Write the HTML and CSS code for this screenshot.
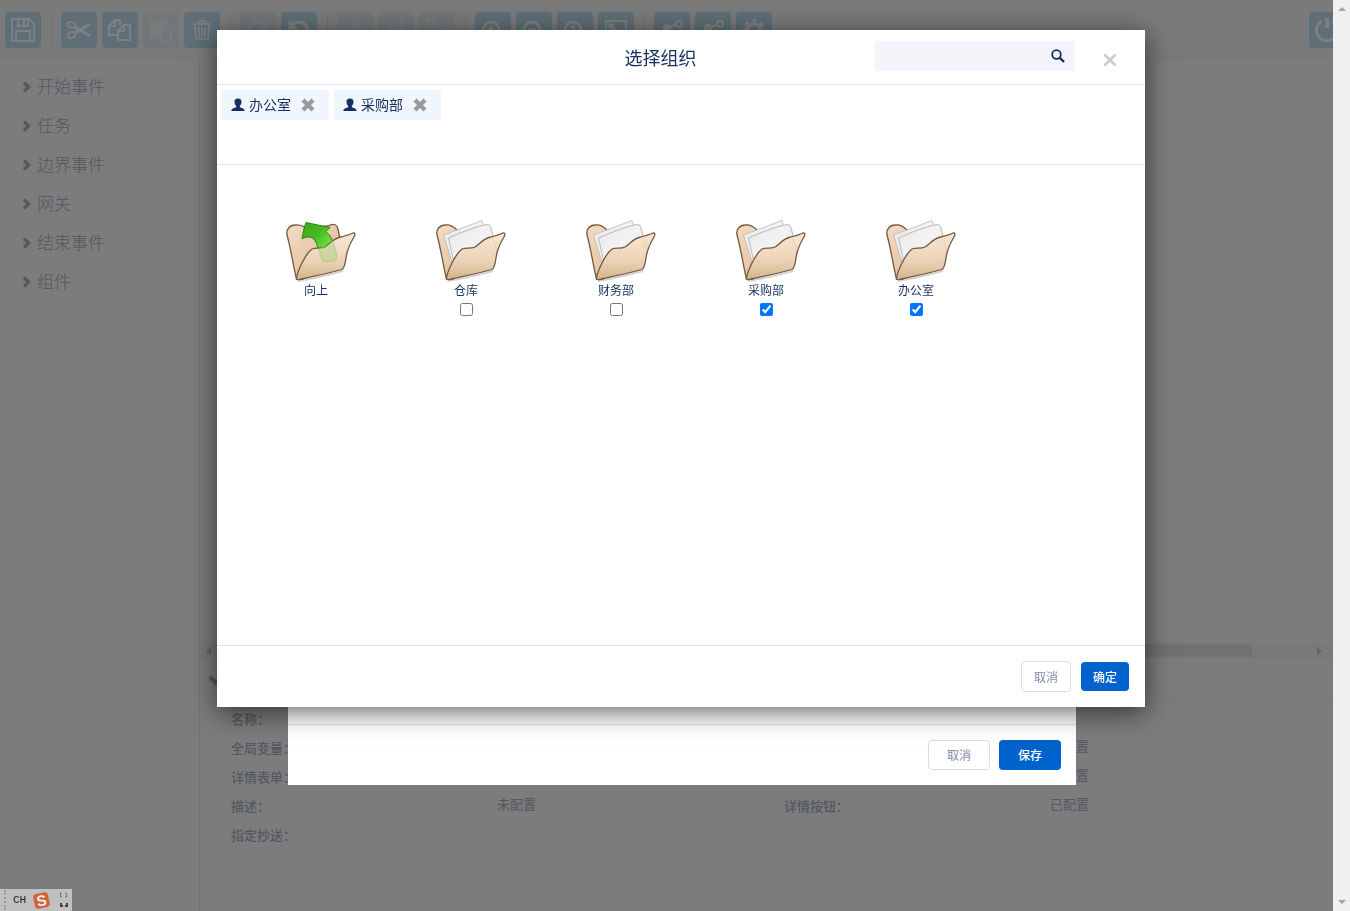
FILE: index.html
```html
<!DOCTYPE html>
<html lang="zh">
<head>
    <meta charset="UTF-8">
    <meta name="viewport" content="width=device-width, initial-scale=1.0">
    <title>流程设计器</title>
    <link rel="stylesheet" href="styles.css">
</head>
<body>
    <svg class="defs" width="0" height="0" aria-hidden="true">
        <defs>
            <linearGradient id="back" x1="0" y1="0" x2="1" y2="1">
                <stop offset="0" stop-color="#f5dcc4"/>
                <stop offset="1" stop-color="#d9b48e"/>
            </linearGradient>
            <linearGradient id="front" x1="0" y1="0" x2="0" y2="1">
                <stop offset="0" stop-color="#f9e6d2"/>
                <stop offset="0.6" stop-color="#ecd3b6"/>
                <stop offset="1" stop-color="#d3b48b"/>
            </linearGradient>
            <linearGradient id="paper" x1="0" y1="0" x2="1" y2="1">
                <stop offset="0" stop-color="#e6e6e6"/>
                <stop offset="0.5" stop-color="#f3f3f3"/>
                <stop offset="1" stop-color="#dedede"/>
            </linearGradient>
            <linearGradient id="green" x1="0" y1="0" x2="1" y2="1">
                <stop offset="0" stop-color="#46a51c"/>
                <stop offset="0.4" stop-color="#45b820"/>
                <stop offset="0.8" stop-color="#73ea42"/>
                <stop offset="1" stop-color="#55cb2b"/>
            </linearGradient>
            <symbol id="flap" viewBox="0 0 80 64">
                <path d="M20.500 59C21 55 23 50 26 44C29 38 32 33 36 30C40 28.500 45 30 49 28C54 25 57 20 63 18.500C69 17 73 16 77 14Q79.500 13.500 78.500 17C76 21 73 27 71.500 32C69 40 70 48 66 50.500C54 54 34 58 23.500 60.500Q20 61 20.500 59Z" fill="url(#front)" stroke="#6f5941" stroke-width="1.300"/>
            </symbol>
            <symbol id="folder" viewBox="0 0 80 64">
                <path d="M22 62C35 60 52 56 67 52" fill="none" stroke="#d4d4d4" stroke-width="2"/>
                <path d="M20.500 60C17 46 15 30 11 16C10 10 14 6 19 6C24 5 27 7 31 11L60 30L27 60Z" fill="url(#back)" stroke="#6f5941" stroke-width="1.300"/>
                <path d="M17.500 16L56 1.500L60 14L27 46Z" fill="url(#paper)" stroke="#b9b9b9" stroke-width="0.800"/>
                <path d="M22.500 19C34 14 48 8 61 5.500Q64 5 65 9L68 20L50 35L28 44Z" fill="url(#paper)" stroke="#aaa" stroke-width="0.800"/>
                <use href="#flap" width="80" height="64"/>
                <path d="M31 40L35 52L66 43M67 20L71 31" fill="none" stroke="#dcc8ad" stroke-width="0.700"/>
            </symbol>
            <symbol id="folder-up" viewBox="0 0 80 64">
                <path d="M22 62C35 60 52 56 67 52" fill="none" stroke="#d4d4d4" stroke-width="2"/>
                <path d="M20.500 60C17 46 15 30 11 16C10 10 14 6 19 6C24 5 27 7 31 9L52 7C57 4 61 5 62 10L66 30L27 60Z" fill="url(#back)" stroke="#6f5941" stroke-width="1.300"/>
                <path d="M26 20C27 14 28 8 30 3.500C38 5 46 7 54 8.500L50 12.500C54 16 56 20 57.500 24L58 34L46 38L42 30C41 24 38 18 33 18C30 18 28 19 26 20Z" fill="url(#green)" stroke="#2c8410" stroke-width="1"/>
                <use href="#flap" width="80" height="64"/>
                <path d="M43 30L50 28L57 22L61 37Q61 41 58 42L49 43Q46 43 45.500 40Z" fill="#a8d077" fill-opacity="0.450" stroke="#a8c47f" stroke-width="0.700"/>
            </symbol>
            <symbol id="user" viewBox="0 0 14 14">
                <path d="M7 0.500C4.600 0.500 3.300 1.900 3.500 4C3.600 6 4.400 7.200 5.200 8V9C4.300 10 0.500 10.200 0.300 13H13.700C13.500 10.200 9.700 10 8.800 9V8C9.600 7.200 10.400 6 10.500 4C10.700 1.900 9.400 0.500 7 0.500Z" fill="#16305f"/>
            </symbol>
            <symbol id="cross" viewBox="0 0 14 14">
                <path d="M2 2L12 12M12 2L2 12" stroke="#999" stroke-width="4.200"/>
            </symbol>
            <symbol id="chevron" viewBox="0 0 10 12">
                <path d="M2 1.500L6.500 6L2 10.500" fill="none" stroke="currentColor" stroke-width="3.400"/>
            </symbol>
            <symbol id="share" viewBox="0 0 24 24">
                <path d="M5 19L7 10L17 6" fill="none" stroke="#fff" stroke-width="2"/>
                <circle cx="7" cy="10" r="3" fill="#fff"/>
                <circle cx="19" cy="6" r="3" fill="none" stroke="#fff" stroke-width="2"/>
                <circle cx="5" cy="19" r="2" fill="#fff"/>
            </symbol>
        </defs>
    </svg>

    <div class="app">
        <div class="toolbar">
            <button type="button" title="保存"><svg viewBox="0 0 24 24"><path d="M1 1H18L23 6V23H1ZM7 1V8H17V1M5 23V13H19V23M13 2V7"/></svg></button>
            <span class="sep"></span>
            <button type="button" title="剪切"><svg viewBox="0 0 24 24"><ellipse cx="4.500" cy="7" rx="4" ry="2.800" transform="rotate(20 4.500 7)"/><ellipse cx="4.500" cy="17" rx="4" ry="2.800" transform="rotate(-20 4.500 17)"/><path d="M8 9L23 18M8 15L23 6" stroke-width="3"/></svg></button>
            <button type="button" title="复制"><svg viewBox="0 0 24 24"><path d="M9 17H1V8L7 2H12V7M7 2V8H1M10 13L16 7H22V22H10ZM16 7V13H10"/></svg></button>
            <button type="button" title="粘贴" disabled><svg viewBox="0 0 24 24"><path fill="#fff" d="M2 3H17V8H12V18H2Z"/><path d="M12 11H18L22 15V22H12Z"/></svg></button>
            <button type="button" title="删除"><svg viewBox="0 0 24 24"><path stroke-width="1.500" d="M3 6H21M9 5V3H15V5M5 7L6 21H18L19 7M9 9V19M12 9V19M15 9V19"/></svg></button>
            <span class="sep"></span>
            <button type="button" title="重做" disabled><svg viewBox="0 0 24 24"><path stroke-width="3" d="M20 9A9 9 0 1 0 21 14M21 3V10H14"/></svg></button>
            <button type="button" title="撤销"><svg viewBox="0 0 24 24"><path stroke-width="3" d="M4 9A9 9 0 1 1 3 14M3 3V10H10"/></svg></button>
            <span class="sep"></span>
            <button type="button" title="水平对齐" disabled><svg viewBox="0 0 24 24"><path stroke-width="3" d="M12 2V22M7 7H17M4 17H20"/></svg></button>
            <button type="button" title="垂直对齐" disabled><svg viewBox="0 0 24 24"><path stroke-width="3" d="M2 12H22M7 8V17M17 3V21"/></svg></button>
            <button type="button" title="相同大小" disabled><svg viewBox="0 0 24 24"><path d="M2 2H10V9H2ZM12 12H22V22H12ZM5 12V20"/></svg></button>
            <span class="sep"></span>
            <button type="button" title="放大"><svg viewBox="0 0 24 24"><circle cx="10" cy="12" r="8" stroke-width="3"/><path stroke-width="3" d="M6 12H14M10 8V16M16 18L22 23"/></svg></button>
            <button type="button" title="缩小"><svg viewBox="0 0 24 24"><circle cx="10" cy="12" r="8" stroke-width="3"/><path stroke-width="3" d="M6 12H14M16 18L22 23"/></svg></button>
            <button type="button" title="实际大小"><svg viewBox="0 0 24 24"><circle cx="10" cy="12" r="8" stroke-width="3"/><path d="M8 10L11 8V17M16 18L22 23"/></svg></button>
            <button type="button" title="适应屏幕"><svg viewBox="0 0 24 24"><path d="M2 3H22V21H2Z"/><path fill="#fff" d="M4 5L11 6L9 8L13 12L11 14L7 10L5 12Z" stroke="none"/></svg></button>
            <span class="sep"></span>
            <button type="button" title="添加拐点"><svg viewBox="0 0 24 24"><use href="#share"/></svg></button>
            <button type="button" title="删除拐点"><svg viewBox="0 0 24 24"><use href="#share"/></svg></button>
            <button type="button" title="设置"><svg viewBox="0 0 24 24"><circle cx="12" cy="13" r="7" stroke-width="4"/><circle cx="12" cy="13" r="10" stroke-width="4" stroke-dasharray="4 3.850" stroke-dashoffset="2"/></svg></button>
            <button type="button" title="退出" class="power"><svg viewBox="0 0 24 24"><path stroke-width="3" d="M7 3A10.500 10.500 0 1 0 17 3"/><path stroke-width="4" d="M12 0V10"/></svg></button>
        </div>

        <div class="workspace">
            <nav class="sidebar">
                <a href="#"><svg><use href="#chevron"/></svg>开始事件</a>
                <a href="#"><svg><use href="#chevron"/></svg>任务</a>
                <a href="#"><svg><use href="#chevron"/></svg>边界事件</a>
                <a href="#"><svg><use href="#chevron"/></svg>网关</a>
                <a href="#"><svg><use href="#chevron"/></svg>结束事件</a>
                <a href="#"><svg><use href="#chevron"/></svg>组件</a>
            </nav>
            <main class="main">
                <div class="canvas"></div>
                <div class="h-scroll">
                    <svg viewBox="0 0 5 8"><path d="M5 0V8L0 4Z"/></svg>
                    <span class="h-thumb"></span>
                    <svg viewBox="0 0 5 8"><path d="M0 0V8L5 4Z"/></svg>
                </div>
                <div class="props-title"><svg viewBox="0 0 16 12"><path d="M2 2L8 8L14 2" fill="none" stroke="currentColor" stroke-width="4"/></svg></div>
                <div class="props">
                    <b>名称：</b><span></span><b></b><span></span>
                    <b>全局变量：</b><span></span><b></b><span>已配置</span>
                    <b>详情表单：</b><span></span><b></b><span>已配置</span>
                    <b>描述：</b><span>未配置</span><b>详情按钮：</b><span>已配置</span>
                    <b>指定抄送：</b><span></span><b></b><span></span>
                </div>
            </main>
        </div>
    </div>

    <div class="backdrop"></div>

    <div class="modal modal-config">
        <div class="modal-footer">
            <button type="button" class="btn">取消</button>
            <button type="button" class="btn btn-primary">保存</button>
        </div>
    </div>

    <div class="modal modal-org" role="dialog" aria-labelledby="orgTitle">
        <div class="modal-header">
            <h4 id="orgTitle">选择组织</h4>
            <div class="search">
                <input type="text" aria-label="搜索">
                <button type="button" title="搜索"><svg viewBox="0 0 14 14"><circle cx="5.500" cy="5.500" r="4.300" fill="none" stroke="#16305f" stroke-width="1.800"/><path d="M8.500 8.500L13 13" stroke="#16305f" stroke-width="2.400"/></svg></button>
            </div>
            <button type="button" class="close" title="关闭"><svg viewBox="0 0 14 14"><path d="M1.500 1.500L12.500 12.500M12.500 1.500L1.500 12.500" stroke="#ccc" stroke-width="2.600"/></svg></button>
        </div>
        <div class="selected">
            <span class="tag"><svg><use href="#user"/></svg><span>办公室</span><button type="button" title="移除"><svg><use href="#cross"/></svg></button></span>
            <span class="tag"><svg><use href="#user"/></svg><span>采购部</span><button type="button" title="移除"><svg><use href="#cross"/></svg></button></span>
        </div>
        <div class="folders">
            <a href="#" class="folder"><svg><use href="#folder-up"/></svg>向上</a>
            <label class="folder"><svg><use href="#folder"/></svg>仓库<input type="checkbox"></label>
            <label class="folder"><svg><use href="#folder"/></svg>财务部<input type="checkbox"></label>
            <label class="folder"><svg><use href="#folder"/></svg>采购部<input type="checkbox" checked></label>
            <label class="folder"><svg><use href="#folder"/></svg>办公室<input type="checkbox" checked></label>
        </div>
        <div class="modal-footer">
            <button type="button" class="btn">取消</button>
            <button type="button" class="btn btn-primary">确定</button>
        </div>
    </div>

    <div class="page-scroll">
        <svg viewBox="0 0 8 4"><path d="M0 4H8L4 0Z"/></svg>
        <svg viewBox="0 0 8 4"><path d="M0 0H8L4 4Z"/></svg>
    </div>

    <div class="ime">
        <span>CH</span>
        <svg class="ime-logo" viewBox="0 0 16 16"><g transform="rotate(-12 8 8)"><rect x="1" y="1" width="14" height="14" rx="3" fill="#d2603a"/><text x="8" y="13" text-anchor="middle">S</text></g></svg>
        <svg class="ime-tools" viewBox="0 0 10 18"><path d="M3 2H1.500V6H3M6 2H7.500V6H6" fill="none" stroke="#777"/><path d="M2 12V15H4M8 12V15H6" fill="none" stroke="#4a4040" stroke-width="2"/></svg>
    </div>
</body>
</html>
```

FILE: styles.css
```css
* {
    box-sizing: border-box;
}
body {
    margin: 0;
    overflow: hidden;
    font-family: "Microsoft YaHei", "Noto Sans CJK SC", sans-serif;
    font-size: 13px;
    color: #16305f;
}
button {
    font-family: inherit;
    padding: 0;
    border: none;
    background: none;
    cursor: pointer;
}
a {
    color: inherit;
    text-decoration: none;
}
svg {
    display: block;
    flex: none;
}
.defs {
    position: absolute;
}

/* designer page */
.app {
    display: flex;
    flex-direction: column;
    height: 100vh;
    background: #f8f8f8;
    color: #a8b0c4;
}
.toolbar {
    display: flex;
    align-items: center;
    gap: 5px;
    height: 60px;
    padding: 0 5px;
    background: #f4f4f4;
    border-bottom: 1px solid #eee;
}
.toolbar button {
    display: flex;
    align-items: center;
    justify-content: center;
    flex: none;
    width: 36px;
    height: 36px;
    border-radius: 4px;
    background: #bedcee;
}
.toolbar button:disabled {
    opacity: 0.3;
}
.toolbar svg {
    width: 24px;
    height: 24px;
    fill: none;
    stroke: #fff;
    stroke-width: 2;
}
.toolbar .power {
    margin-left: auto;
}
.sep {
    width: 10px;
    height: 30px;
    background: linear-gradient(#e2e2e2, #e2e2e2) center / 1px 100% no-repeat;
}
.workspace {
    display: flex;
    flex: 1;
    min-height: 0;
}
.sidebar {
    width: 200px;
    padding-top: 6px;
    border-right: 1px solid #e8e8e8;
}
.sidebar a {
    display: flex;
    align-items: center;
    gap: 5px;
    height: 39px;
    padding-left: 22px;
    font-size: 17px;
    font-weight: 300;
}
.sidebar svg {
    width: 10px;
    height: 12px;
    margin-top: 2px;
}
.main {
    display: flex;
    flex: 1;
    flex-direction: column;
}
.canvas {
    flex: 1;
    margin-right: 4px;
    border-right: 17px solid #f2f2f2;
}
.h-scroll {
    display: flex;
    align-items: center;
    height: 17px;
    padding: 0 28px 0 6px;
    background: #f2f2f2;
}
.h-scroll svg {
    width: 5px;
    height: 8px;
    fill: #c4c4c4;
}
.h-thumb {
    flex: 1;
    height: 13px;
    margin: 0 65px 0 6px;
    background: #e2e2e2;
}
.props-title {
    height: 43px;
    padding: 16px 8px;
    border-bottom: 1px solid #eee;
}
.props-title svg {
    width: 16px;
    height: 12px;
}
.props {
    display: grid;
    grid-template-columns: 266fr 287fr 266fr 300fr;
    grid-auto-rows: 29px;
    height: 209px;
    padding: 2px 0 0 31px;
    line-height: 29px;
}
.props b {
    font-weight: 500;
}
.props span {
    line-height: 26px;
}
.backdrop {
    position: fixed;
    inset: 0;
    background: rgba(0, 0, 0, 0.5);
}

/* dialogs */
.modal {
    position: absolute;
    display: flex;
    flex-direction: column;
    background: #fff;
}
.modal-config {
    top: 60px;
    left: 288px;
    right: 274px;
    min-height: 725px;
}
.modal-org {
    top: 30px;
    left: 217px;
    right: 205px;
    box-shadow: 0 5px 25px rgba(0, 0, 0, 0.6);
}
.modal-header {
    display: flex;
    align-items: center;
    height: 55px;
    padding: 0 28px 0 229px;
    border-bottom: 1px solid #dfe4f0;
}
.modal-header h4 {
    flex: 1;
    margin: 0;
    font-size: 18px;
    font-weight: 400;
    text-align: center;
}
.search {
    display: flex;
    align-items: center;
    width: 200px;
    height: 30px;
    margin: 0 28px 2px 0;
    padding-right: 10px;
    border-radius: 2px;
    background: #f4f5fa;
}
.search input {
    flex: 1;
    min-width: 0;
    height: 30px;
    padding: 0 10px;
    border: none;
    outline: none;
    background: transparent;
}
.search svg {
    width: 14px;
    height: 14px;
}
.close {
    margin-top: 6px;
}
.close svg {
    width: 14px;
    height: 14px;
}
.selected {
    display: flex;
    align-items: flex-start;
    gap: 5px;
    height: 80px;
    padding: 5px;
    border-bottom: 1px solid #e0e4e8;
}
.tag {
    display: flex;
    align-items: center;
    gap: 4px;
    height: 30px;
    padding: 0 14px 0 9px;
    background: #f1f5fe;
    font-size: 14px;
}
.tag span {
    padding-bottom: 2px;
}
.tag svg {
    width: 14px;
    height: 14px;
}
.tag button {
    margin-left: 6px;
}
.folders {
    display: flex;
    flex-wrap: wrap;
    align-content: flex-start;
    min-height: 480px;
    padding: 54px 24px 0;
}
.folder {
    display: flex;
    flex-direction: column;
    align-items: center;
    width: 150px;
    font-size: 12px;
    line-height: 18px;
}
.folder svg {
    width: 80px;
    height: 64px;
    margin-bottom: -2px;
}
.folder input {
    margin: 4px 0 0;
}
.modal-footer {
    display: flex;
    align-items: center;
    justify-content: flex-end;
    gap: 10px;
    height: 62px;
    margin-top: auto;
    padding-right: 16px;
    border-top: 1px solid #e2e2e2;
}
.btn {
    width: 50px;
    height: 31px;
    padding-bottom: 1px;
    border: 1px solid #d9dcea;
    border-radius: 4px;
    background: #fff;
    color: #7e8ca5;
    font-size: 12px;
}
.btn-primary {
    width: 48px;
    height: 29px;
    border: none;
    background: #0062cc;
    color: #fff;
    font-weight: 500;
}
.modal-config .modal-footer {
    gap: 9px;
    height: 61px;
    padding-right: 15px;
}
.modal-config .btn {
    width: 62px;
    height: 30px;
}

/* window chrome */
.page-scroll {
    position: fixed;
    top: 0;
    right: 0;
    bottom: 0;
    display: flex;
    flex-direction: column;
    align-items: center;
    justify-content: space-between;
    width: 17px;
    padding: 7px 0;
    background: #f0f0f0;
}
.page-scroll svg {
    width: 8px;
    height: 4px;
    fill: #a3a3a3;
}
.ime {
    position: fixed;
    left: 0;
    bottom: 0;
    display: flex;
    align-items: center;
    width: 72px;
    height: 22px;
    padding-left: 9px;
    background: #c0c0c0;
    color: #222;
    font-family: "Liberation Mono", monospace;
    font-size: 11px;
}
.ime::before {
    content: "";
    position: absolute;
    left: 4px;
    height: 20px;
    border-left: 2px dotted #999;
}
.ime span {
    margin: 0 7px 0 4px;
}
.ime-logo {
    width: 17px;
    height: 17px;
}
.ime-logo text {
    fill: #eee;
    font-family: "Liberation Sans", sans-serif;
    font-size: 14px;
    font-weight: 700;
}
.ime-tools {
    width: 10px;
    height: 18px;
    margin-left: 9px;
}
```
